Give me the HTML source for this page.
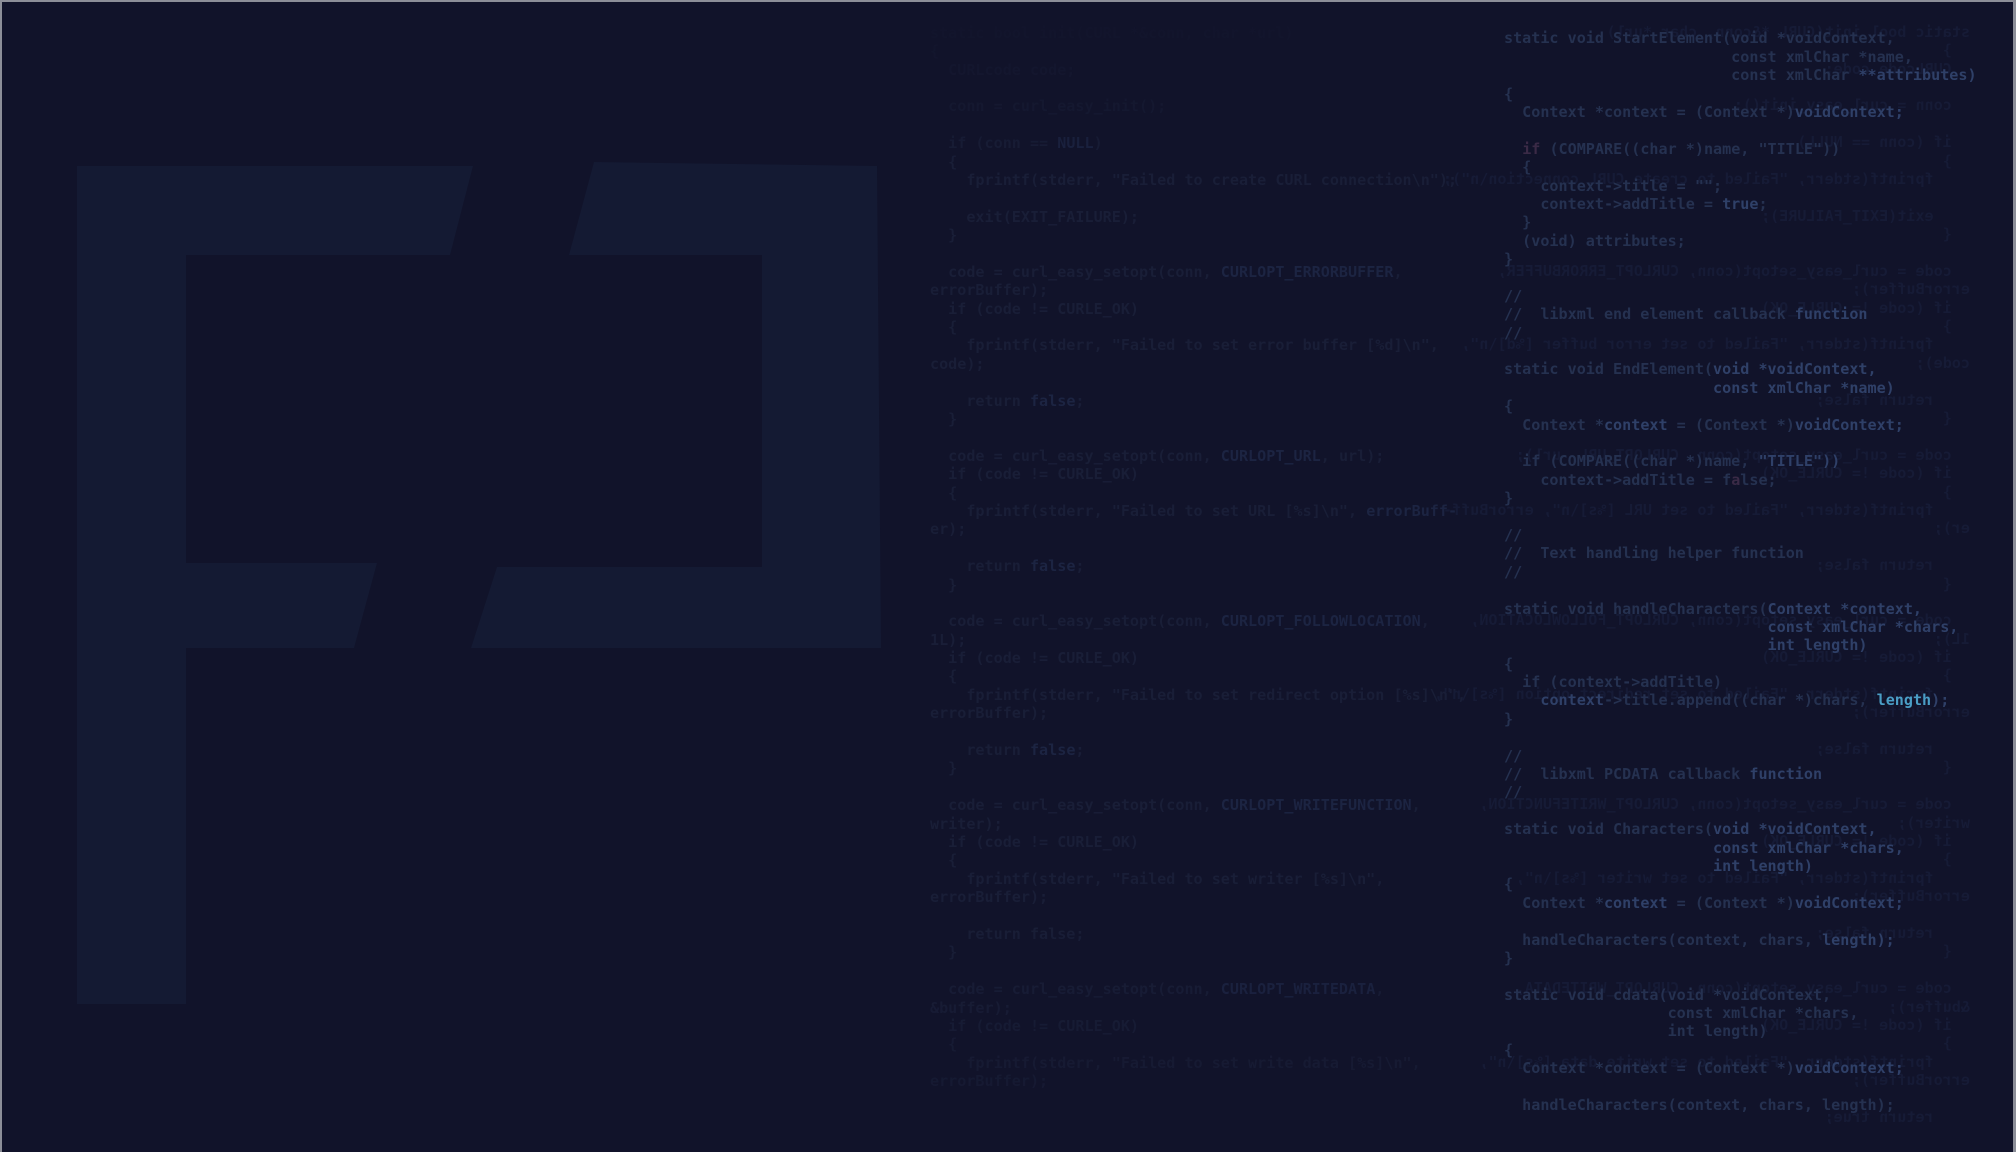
<!DOCTYPE html>
<html><head><meta charset="utf-8">
<style>
html,body{margin:0;padding:0;}
body{width:2016px;height:1152px;background:#8c8e98;position:relative;overflow:hidden;}
#frame{position:absolute;left:2px;top:2px;width:2011px;height:1150px;background:#11132a;overflow:hidden;}
pre{margin:0;position:absolute;font-family:"DejaVu Sans Mono","Liberation Mono",monospace;font-weight:bold;font-size:15.1px;line-height:18.39px;white-space:pre;}
#mid{left:928px;top:21.8px;color:#191e37;-webkit-mask-image:linear-gradient(to bottom,rgba(0,0,0,0.15) 0px,rgba(0,0,0,0.5) 90px,#000 140px,#000 900px,rgba(0,0,0,0.6) 1080px);mask-image:linear-gradient(to bottom,rgba(0,0,0,0.15) 0px,rgba(0,0,0,0.5) 90px,#000 140px,#000 900px,rgba(0,0,0,0.6) 1080px);}
#mid b{color:#1c2442;font-weight:bold;}
#mir{left:1368px;top:20.8px;width:600px;transform:scaleX(-1);color:#161b36;}
#right{left:1502px;top:27.4px;color:#253150;}
#right b{color:#2f4068;font-weight:bold;}
#right i{font-style:normal;color:#3a2a46;}
#right u{text-decoration:none;color:#4a9ec6;}
</style></head><body>
<div id="frame">
<svg width="2011" height="1150" style="position:absolute;left:0;top:0">
<polygon fill="#141a33" points="75,164 471,164 448,253 184,253 184,561 375,561 352,646 184,646 184,1002 75,1002"/>
<polygon fill="#141a33" points="592,160 875,164 879,646 469,646 495,565 760,565 760,253 567,253"/>
</svg>
<pre id="mid">static bool init(CURL *&amp;conn, char *url)
{
  CURLcode code;

  conn = curl_easy_init();

  if (conn == <b>NULL</b>)
  {
    fprintf(stderr, "Failed to create CURL connection\n");

    exit(EXIT_FAILURE);
  }

  code = curl_easy_setopt(conn, <b>CURLOPT_ERRORBUFFER</b>,
errorBuffer);
  if (code != CURLE_OK)
  {
    fprintf(stderr, "Failed to set error buffer [%d]\n",
code);

    return <b>false</b>;
  }

  code = curl_easy_setopt(conn, <b>CURLOPT_URL</b>, url);
  if (code != CURLE_OK)
  {
    fprintf(stderr, "Failed to set URL [%s]\n", <b>errorBuff-</b>
er);

    return <b>false</b>;
  }

  code = curl_easy_setopt(conn, <b>CURLOPT_FOLLOWLOCATION</b>,
1L);
  if (code != CURLE_OK)
  {
    fprintf(stderr, "Failed to set redirect option [%s]\n",
errorBuffer);

    return <b>false</b>;
  }

  code = curl_easy_setopt(conn, <b>CURLOPT_WRITEFUNCTION</b>,
writer);
  if (code != CURLE_OK)
  {
    fprintf(stderr, "Failed to set writer [%s]\n",
errorBuffer);

    return false;
  }

  code = curl_easy_setopt(conn, <b>CURLOPT_WRITEDATA</b>,
&amp;buffer);
  if (code != CURLE_OK)
  {
    fprintf(stderr, "Failed to set write data [%s]\n",
errorBuffer);
</pre>
<pre id="mir">static bool init(CURL *&amp;conn, char *url)
  }
  CURLcode code;

  conn = curl_easy_init();

  if (conn == NULL)
  }
    fprintf(stderr, "Failed to create CURL connection\n");

    exit(EXIT_FAILURE);
  {

  code = curl_easy_setopt(conn, CURLOPT_ERRORBUFFER,
errorBuffer);
  if (code != CURLE_OK)
  }
    fprintf(stderr, "Failed to set error buffer [%d]\n",
code);

    return false;
  {

  code = curl_easy_setopt(conn, CURLOPT_URL, url);
  if (code != CURLE_OK)
  }
    fprintf(stderr, "Failed to set URL [%s]\n", errorBuff-
er);

    return false;
  {

  code = curl_easy_setopt(conn, CURLOPT_FOLLOWLOCATION,
1L);
  if (code != CURLE_OK)
  }
    fprintf(stderr, "Failed to set redirect option [%s]\n",
errorBuffer);

    return false;
  {

  code = curl_easy_setopt(conn, CURLOPT_WRITEFUNCTION,
writer);
  if (code != CURLE_OK)
  }
    fprintf(stderr, "Failed to set writer [%s]\n",
errorBuffer);

    return false;
  {

  code = curl_easy_setopt(conn, CURLOPT_WRITEDATA,
&amp;buffer);
  if (code != CURLE_OK)
  }
    fprintf(stderr, "Failed to set write data [%s]\n",
errorBuffer);

    return true;
</pre>
<pre id="right">static void StartElement(void *voidContext,
                         const xmlChar *name,
                         const xmlChar <b>**attributes)</b>
{
  Context *context = (Context *)<b>voidContext;</b>

  <i>if</i> (COMPARE((char *)name, "TITLE"))
  {
    context-&gt;title = "";
    context-&gt;addTitle = <b>true</b>;
  }
  (void) attributes;
}

//
//  libxml end element callback <b>function</b>
//

static void EndElement(<b>void *voidContext,</b>
                       <b>const xmlChar *name)</b>
{
  Context *<b>context</b> = (Context *)<b>voidContext;</b>

  if (COMPARE((char *)name, <b>"TITLE"))</b>
    context-&gt;addTitle = f<i>a</i>lse;
}

//
//  Text handling helper function
//

static void handleCharacters(<b>Context *context,</b>
                             <b>const xmlChar *chars,</b>
                             <b>int length)</b>
{
  if (context-&gt;addTitle)
    <b>context</b>-&gt;title.append((char *)chars, <u>length</u><b>);</b>
}

//
//  libxml PCDATA callback <b>function</b>
//

static void Characters(<b>void *voidContext,</b>
                       <b>const xmlChar *chars,</b>
                       <b>int length)</b>
{
  Context *<b>context</b> = (Context *)<b>voidContext;</b>

  handleCharacters(context, chars, <b>length);</b>
}

static void cdata(void *voidContext,
                  const xmlChar *chars,
                  int length)
{
  Context *context = (Context *)<b>voidContext;</b>

  handleCharacters(context, chars, length);
</pre>
</div>
</body></html>
